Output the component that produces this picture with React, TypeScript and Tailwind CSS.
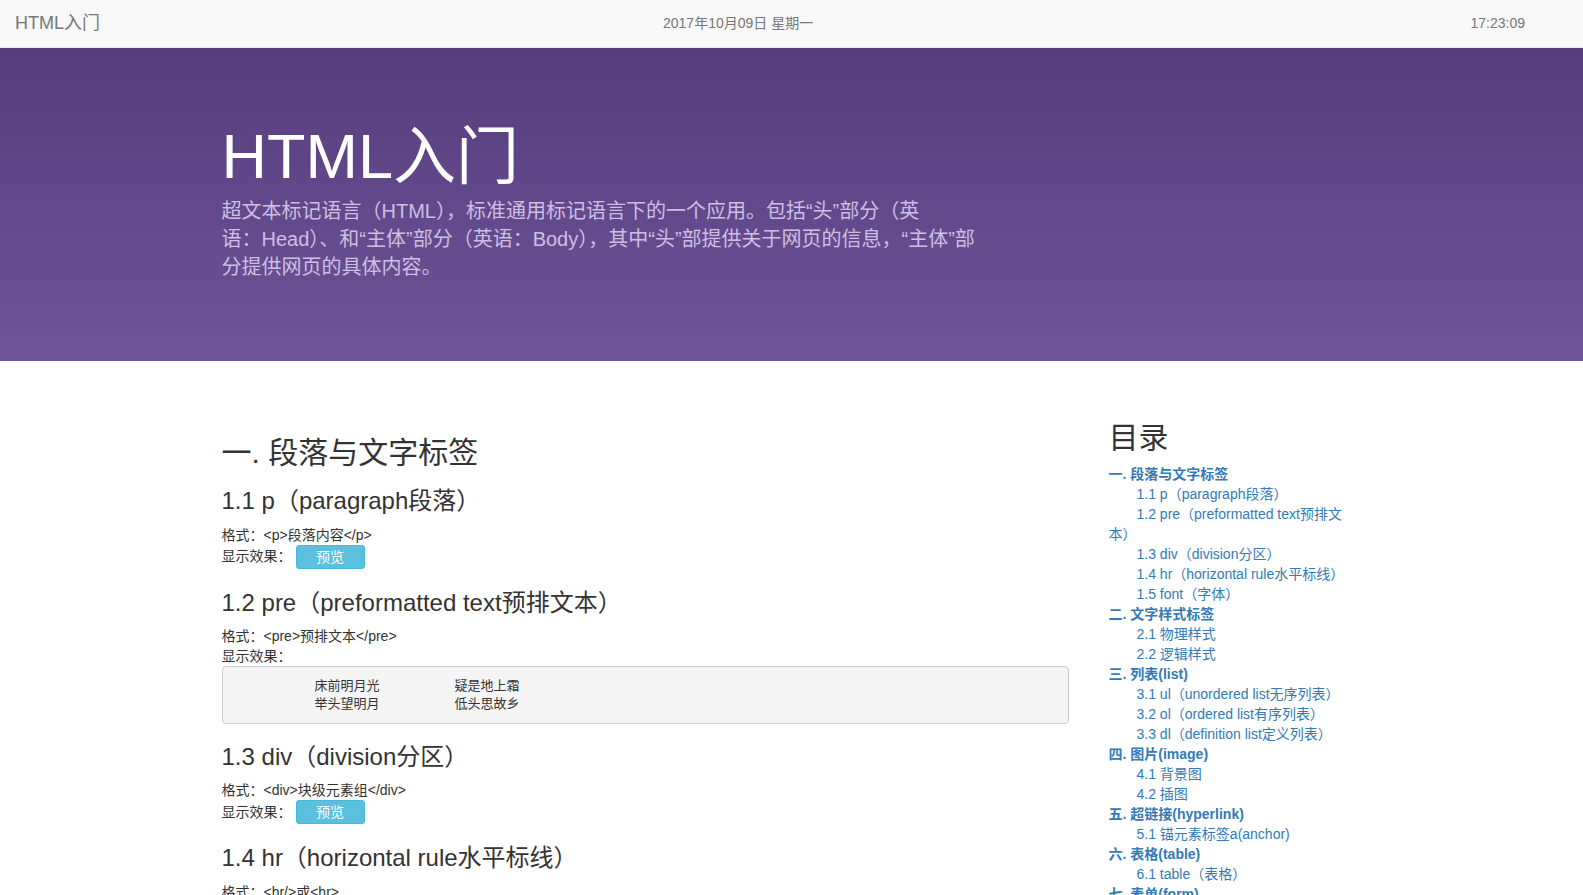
import React from 'react';

const FONT = '[font-family:"Liberation_Sans","Noto_Sans_CJK_SC",sans-serif]';

type TocItem = { label: string; sub?: boolean };

const toc: TocItem[] = [
  { label: '一. 段落与文字标签' },
  { label: '1.1 p（paragraph段落）', sub: true },
  { label: '1.2 pre（preformatted text预排文本）', sub: true },
  { label: '1.3 div（division分区）', sub: true },
  { label: '1.4 hr（horizontal rule水平标线）', sub: true },
  { label: '1.5 font（字体）', sub: true },
  { label: '二. 文字样式标签' },
  { label: '2.1 物理样式', sub: true },
  { label: '2.2 逻辑样式', sub: true },
  { label: '三. 列表(list)' },
  { label: '3.1 ul（unordered list无序列表）', sub: true },
  { label: '3.2 ol（ordered list有序列表）', sub: true },
  { label: '3.3 dl（definition list定义列表）', sub: true },
  { label: '四. 图片(image)' },
  { label: '4.1 背景图', sub: true },
  { label: '4.2 插图', sub: true },
  { label: '五. 超链接(hyperlink)' },
  { label: '5.1 锚元素标签a(anchor)', sub: true },
  { label: '六. 表格(table)' },
  { label: '6.1 table（表格）', sub: true },
  { label: '七. 表单(form)' },
  { label: '7.1 form（表单）', sub: true },
];

function PreviewRow() {
  return (
    <div className="flex items-center h-[24px] text-[14px] text-[#333]">
      <span>显示效果：</span>
      <button className="ml-[4px] w-[69px] h-[24px] rounded-[3px] bg-[#5bc0de] border border-[#46b8da] text-white text-[14px] leading-none">
        预览
      </button>
    </div>
  );
}

export default function App() {
  return (
    <div className={`${FONT} min-h-screen bg-white text-[#333]`}>
      {/* Navbar */}
      <div className="flex items-center h-[48px] bg-[#f8f8f8] border-b border-[#e7e7e7] text-[#777]">
        <div className="w-[663px] pl-[15px] text-[18px]">HTML入门</div>
        <div className="text-[14px]">2017年10月09日 星期一</div>
        <div className="ml-auto pr-[58px] text-[14px]">17:23:09</div>
      </div>

      {/* Jumbotron */}
      <div className="bg-linear-to-b from-[#563d7c] to-[#6f5499] pt-[74px] pb-[80px]">
        <div className="w-[1140px] mx-auto">
          <h1 className="text-[63px] leading-[1.1] text-white">HTML入门</h1>
          <p className="mt-[6px] text-[20px] leading-[28px] text-[#cdbfe3]">
            超文本标记语言（HTML），标准通用标记语言下的一个应用。包括“头”部分（英
            <br />
            语：Head）、和“主体”部分（英语：Body），其中“头”部提供关于网页的信息，“主体”部
            <br />
            分提供网页的具体内容。
          </p>
        </div>
      </div>

      {/* Content */}
      <div className="w-[1140px] mx-auto pt-[60px] flex items-start">
        <div className="w-[847px] pt-[15px] flex flex-col">
          <h2 className="text-[30px] leading-[1.1]">一. 段落与文字标签</h2>

          <h3 className="mt-[19px] text-[24px] leading-[1.1]">1.1 p（paragraph段落）</h3>
          <div className="mt-[10px] text-[14px] leading-[20px]">格式：&lt;p&gt;段落内容&lt;/p&gt;</div>
          <PreviewRow />

          <h3 className="mt-[21px] text-[24px] leading-[1.1]">1.2 pre（preformatted text预排文本）</h3>
          <div className="mt-[10px] text-[14px] leading-[20px]">格式：&lt;pre&gt;预排文本&lt;/pre&gt;</div>
          <div className="text-[14px] leading-[20px]">显示效果：</div>
          <div className="border border-[#ccc] rounded-[4px] bg-[#f5f5f5] py-[9.5px] pl-[92px] text-[13px] leading-[18.5px] text-[#333]">
            <div className="flex">
              <span className="w-[140px]">床前明月光</span>
              <span>疑是地上霜</span>
            </div>
            <div className="flex">
              <span className="w-[140px]">举头望明月</span>
              <span>低头思故乡</span>
            </div>
          </div>

          <h3 className="mt-[20px] text-[24px] leading-[1.1]">1.3 div（division分区）</h3>
          <div className="mt-[10px] text-[14px] leading-[20px]">格式：&lt;div&gt;块级元素组&lt;/div&gt;</div>
          <PreviewRow />

          <h3 className="mt-[21px] text-[24px] leading-[1.1]">1.4 hr（horizontal rule水平标线）</h3>
          <div className="mt-[10px] text-[14px] leading-[20px]">格式：&lt;hr/&gt;或&lt;hr&gt;</div>
          <PreviewRow />
        </div>

        <div className="ml-[40px] w-[245px]">
          <h2 className="text-[30px] leading-[1.1]">目录</h2>
          <ul className="mt-[10px] text-[14px] leading-[20px] text-[#337ab7]">
            {toc.map((item) => (
              <li key={item.label} className={item.sub ? 'indent-[28px]' : 'font-bold'}>
                {item.label}
              </li>
            ))}
          </ul>
        </div>
      </div>
    </div>
  );
}
